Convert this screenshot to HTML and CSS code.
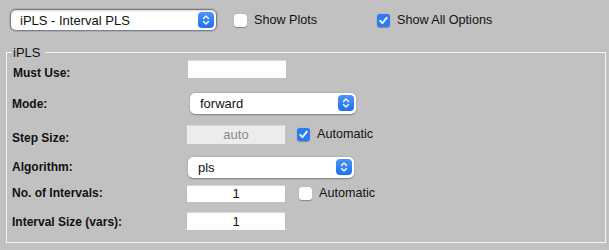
FILE: index.html
```html
<!DOCTYPE html>
<html>
<head>
<meta charset="utf-8">
<link rel="stylesheet" href="styles.css">
</head>
<body>
<div class="top">
  <div class="select select-main">
    <span class="select-text">iPLS - Interval PLS</span>
    <span class="stepper"><svg width="8" height="12" viewBox="0 0 8 12"><path d="M1.5 4.5 L4 2 L6.5 4.5 M1.5 7.5 L4 10 L6.5 7.5" fill="none" stroke="#fff" stroke-width="1.4" stroke-linecap="round" stroke-linejoin="round"/></svg></span>
  </div>
  <label class="check check-plots"><span class="box"></span>Show Plots</label>
  <label class="check check-all"><span class="box on"><svg width="11" height="11" viewBox="0 0 11 11"><path d="M2.2 5.8 L4.4 8.2 L8.8 2.6" fill="none" stroke="#fff" stroke-width="1.8" stroke-linecap="round" stroke-linejoin="round"/></svg></span>Show All Options</label>
</div>
<fieldset class="group">
  <legend>iPLS</legend>
  <div class="rows">
    <div class="row r1"><span class="lbl lbl-first lbl-low">Must Use:</span><span class="field"></span></div>
    <div class="row r2"><span class="lbl lbl-mid">Mode:</span>
      <div class="select select-row sel-mode"><span class="select-text">forward</span><span class="stepper"><svg width="8" height="12" viewBox="0 0 8 12"><path d="M1.5 4.5 L4 2 L6.5 4.5 M1.5 7.5 L4 10 L6.5 7.5" fill="none" stroke="#fff" stroke-width="1.4" stroke-linecap="round" stroke-linejoin="round"/></svg></span></div>
    </div>
    <div class="row r3"><span class="lbl lbl-low">Step Size:</span><span class="field disabled">auto</span>
      <label class="check check-auto1"><span class="box on"><svg width="11" height="11" viewBox="0 0 11 11"><path d="M2.2 5.8 L4.4 8.2 L8.8 2.6" fill="none" stroke="#fff" stroke-width="1.8" stroke-linecap="round" stroke-linejoin="round"/></svg></span>Automatic</label>
    </div>
    <div class="row r4"><span class="lbl">Algorithm:</span>
      <div class="select select-row sel-alg"><span class="select-text">pls</span><span class="stepper"><svg width="8" height="12" viewBox="0 0 8 12"><path d="M1.5 4.5 L4 2 L6.5 4.5 M1.5 7.5 L4 10 L6.5 7.5" fill="none" stroke="#fff" stroke-width="1.4" stroke-linecap="round" stroke-linejoin="round"/></svg></span></div>
    </div>
    <div class="row r5"><span class="lbl">No. of Intervals:</span><span class="field">1</span>
      <label class="check check-auto2"><span class="box"></span>Automatic</label>
    </div>
    <div class="row r6"><span class="lbl lbl-mid">Interval Size (vars):</span><span class="field">1</span></div>
  </div>
</fieldset>
</body>
</html>
```
FILE: styles.css
```css
html, body {
  margin: 0;
  padding: 0;
  background: #c1c1c1;
  font-family: "Liberation Sans", Arial, sans-serif;
  color: #111;
  width: 609px;
  height: 250px;
  overflow: hidden;
}

.top {
  display: flex;
  align-items: center;
  height: 22px;
  padding: 9px 0 0 10px;
}

.select {
  box-sizing: border-box;
  display: flex;
  align-items: center;
  justify-content: space-between;
  background: #fff;
  border-radius: 5px;
  font-size: 13px;
  color: #111;
}

.select-main {
  width: 207px;
  height: 22px;
  border: 1px solid #7d8190;
  box-shadow: 0 0 0 1px #a9aab3, inset 0 1px 1px rgba(0,0,0,0.15);
  padding: 0 2px 0 9px;
  border-radius: 6px;
}

.select-row {
  height: 21px;
  padding: 0 2px 0 10px;
  box-shadow: 0 0.5px 1.5px rgba(0,0,0,0.35);
}

.sel-mode { width: 166px; margin-left: 3px; }
.sel-alg { width: 166px; margin-left: 1px; }

.stepper {
  width: 16px;
  height: 16px;
  border-radius: 4px;
  background: linear-gradient(#4a95f8, #1f6ff0);
  display: flex;
  align-items: center;
  justify-content: center;
}

.check {
  display: flex;
  align-items: center;
  font-size: 12.6px;
  color: #111;
}

.box {
  box-sizing: border-box;
  width: 13px;
  height: 13px;
  border-radius: 3px;
  background: #fff;
  box-shadow: 0 0.5px 1px rgba(0,0,0,0.3);
  margin-right: 7px;
  display: flex;
  align-items: center;
  justify-content: center;
}

.box.on {
  background: #2a7cf4;
}

.check-plots { margin-left: 17px; }
.check-all { margin-left: 60px; }

.group {
  box-sizing: border-box;
  margin: 0 0 0 6px;
  width: 600px;
  height: 197px;
  border: 1px solid #f4f4f4;
  padding: 0 0 0 5px;
  position: relative;
  top: 15px;
}

.group legend {
  font-size: 13px;
  padding: 0 5px 0 1px;
  margin-left: 0;
  color: #111;
  line-height: 13px;
}

.rows {
  display: grid;
  grid-template-rows: 34px 31px 33px 26px 28px 22px;
  margin-top: -1px;
}

.row {
  display: flex;
  align-items: center;
  height: 22px;
}

.lbl {
  width: 175px;
  font-size: 12px;
  font-weight: bold;
  color: #111;
}

.lbl-low { margin-top: 7px; }
.lbl-mid { margin-top: 2px; }

.lbl-first { margin-left: 1px; width: 174px; }

.field {
  box-sizing: border-box;
  width: 98px;
  height: 17px;
  background: #fff;
  border-top: 1px solid #d8d8d8;
  font-size: 13px;
  text-align: center;
  line-height: 16px;
  color: #111;
}

.r1 .field { margin-left: 1px; height: 18px; }
.r6 .field { height: 18px; line-height: 17px; }

.field.disabled {
  background: #ececec;
  color: #8a8a8a;
  height: 19px;
  line-height: 18px;
}

.check-auto1 { margin-left: 12px; }
.check-auto2 { margin-left: 14px; }
```
